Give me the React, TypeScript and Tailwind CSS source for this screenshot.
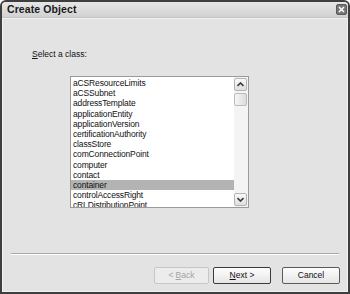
const classes = [
  "aCSResourceLimits",
  "aCSSubnet",
  "addressTemplate",
  "applicationEntity",
  "applicationVersion",
  "certificationAuthority",
  "classStore",
  "comConnectionPoint",
  "computer",
  "contact",
  "container",
  "controlAccessRight",
  "cRLDistributionPoint",
];

const font = { fontFamily: '"Liberation Sans", Arial, sans-serif' };

function ScrollButton({ dir }: { dir: "up" | "down" }) {
  return (
    <div className="w-[13px] h-[13px] rounded-[2px] border border-[#b4b4b4] bg-gradient-to-b from-[#fafafa] to-[#dedede] flex items-center justify-center">
      <svg width="7" height="5" viewBox="0 0 7 5">
        <path
          d={dir === "up" ? "M0.5 4 L3.5 1 L6.5 4" : "M0.5 1 L3.5 4 L6.5 1"}
          fill="none"
          stroke="#3a3a3a"
          strokeWidth="1.6"
        />
      </svg>
    </div>
  );
}

export default function App() {
  return (
    <div className="w-[350px] h-[294px] bg-white" style={font}>
      <div className="w-full h-full flex flex-col rounded-t-[6px] border-2 border-[#3e3e3e] bg-[#d4d4d4] overflow-hidden">
        {/* title bar */}
        <div className="h-[16px] flex items-center justify-between pl-[5px] pr-[1px] bg-gradient-to-b from-[#e6e6e6] to-[#d2d2d2] border-b border-[#c4c4c4]">
          <span className="text-[10.5px] font-bold text-[#1a1a1a] leading-none tracking-[0.1px]">Create Object</span>
          <div className="w-[11px] h-[11px] rounded-[2px] bg-[#777] border border-[#5a5a5a] flex items-center justify-center">
            <svg width="7" height="7" viewBox="0 0 7 7">
              <path d="M1 1 L6 6 M6 1 L1 6" stroke="#fff" strokeWidth="1.5" />
            </svg>
          </div>
        </div>

        {/* client */}
        <div className="flex-1 flex flex-col bg-[#e3e3e3] border border-[#f2f2f2]">
          <div className="pt-[30px] pl-[29px] text-[8.5px] leading-[11px] text-[#111]">
            <span className="underline">S</span>elect a class:
          </div>

          <div className="mt-[16px] ml-[67px] w-[179px] h-[132px] border border-[#9a9a9a] bg-white flex">
            <div className="flex-1 flex flex-col overflow-hidden pt-[1px]">
              {classes.map((c) => (
                <div
                  key={c}
                  className={`h-[10.2px] shrink-0 pl-[2px] text-[8.5px] leading-[10.2px] tracking-[-0.15px] text-[#111] whitespace-nowrap ${
                    c === "container" ? "bg-[#b3b3b3]" : ""
                  }`}
                >
                  {c}
                </div>
              ))}
            </div>
            <div className="w-[14px] bg-[#f4f4f4] flex flex-col items-start justify-between pt-[1px] pb-[1px]">
              <div className="flex flex-col gap-[2px]">
                <ScrollButton dir="up" />
                <div className="w-[13px] h-[13px] rounded-[2px] border border-[#bcbcbc] bg-gradient-to-r from-[#f6f6f6] to-[#dcdcdc]" />
              </div>
              <ScrollButton dir="down" />
            </div>
          </div>

          <div className="mt-[45px] mx-[8px] h-[2px] border-t border-[#a8a8a8] border-b border-b-white" />

          <div className="mt-[12px] flex pl-[151px] text-[8.5px] leading-none">
            <div className="w-[55px] h-[17px] rounded-[2px] border border-[#c6c6c6] bg-[#ececec] flex items-center justify-center text-[#a4a4a4]">
              &lt; <span className="underline ml-[2px]">B</span>ack
            </div>
            <div className="ml-[4px] w-[58px] h-[17px] rounded-[2px] border border-[#3a3a3a] bg-gradient-to-b from-[#fdfdfd] to-[#e6e6e6] flex items-center justify-center text-[#111]">
              <span className="underline">N</span>ext &gt;
            </div>
            <div className="ml-[11px] w-[58px] h-[17px] rounded-[2px] border border-[#5a5a5a] bg-gradient-to-b from-[#fdfdfd] to-[#e6e6e6] flex items-center justify-center text-[#111]">
              Cancel
            </div>
          </div>
        </div>
      </div>
    </div>
  );
}
